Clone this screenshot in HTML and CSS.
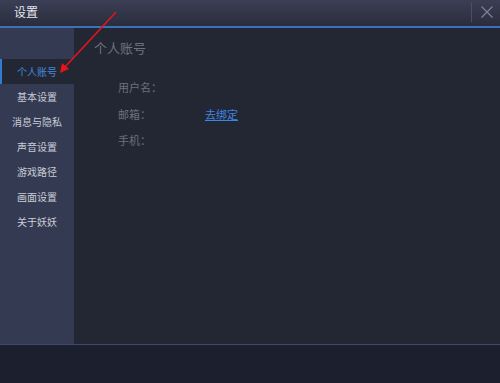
FILE: index.html
```html
<!DOCTYPE html>
<html>
<head>
<meta charset="utf-8">
<link rel="stylesheet" href="styles.css">
</head>
<body>
<div class="window">
  <div class="titlebar">
    <span class="title">设置</span>
    <div class="close">
      <svg width="14" height="14" viewBox="0 0 14 14"><path d="M1.5 1.5 L12.5 12.5 M12.5 1.5 L1.5 12.5" stroke="#7b8199" stroke-width="1.3" fill="none"/></svg>
    </div>
  </div>
  <div class="body">
    <div class="sidebar">
      <div class="item active">个人账号</div>
      <div class="item">基本设置</div>
      <div class="item">消息与隐私</div>
      <div class="item">声音设置</div>
      <div class="item">游戏路径</div>
      <div class="item">画面设置</div>
      <div class="item">关于妖妖</div>
    </div>
    <div class="main">
      <div class="heading">个人账号</div>
      <div class="rows">
        <div class="row"><span class="label">用户名：</span></div>
        <div class="row"><span class="label">邮箱：</span><a class="link" href="#">去绑定</a></div>
        <div class="row"><span class="label">手机：</span></div>
      </div>
    </div>
  </div>
  <div class="footer"></div>
  <svg class="arrow" width="500" height="383" viewBox="0 0 500 383">
    <line x1="116" y1="12" x2="64" y2="68" stroke="#e2151b" stroke-width="1.6"/>
    <polygon points="60,73 62,63 69,69" fill="#e2151b"/>
  </svg>
</div>
</body>
</html>
```
FILE: styles.css
```css
* { box-sizing: border-box; }
html, body { margin: 0; padding: 0; }
body {
  width: 500px;
  height: 383px;
  overflow: hidden;
  background: #1c1f2d;
  font-family: "Noto Sans CJK SC", "Liberation Sans", sans-serif;
}
.window {
  position: relative;
  width: 500px;
  height: 383px;
  display: flex;
  flex-direction: column;
}
.titlebar {
  height: 28px;
  flex: none;
  background: linear-gradient(#3b3f55, #2a2d3d);
  border-bottom: 2px solid #3e70b8;
  display: flex;
  align-items: center;
  justify-content: space-between;
  padding-left: 14px;
}
.title {
  color: #e4e6ec;
  font-size: 12px;
  line-height: 12px;
  margin-top: -2px;
}
.close {
  width: 29px;
  height: 20px;
  margin-top: -3px;
  border-left: 1px solid #4a4f66;
  display: flex;
  align-items: center;
  justify-content: center;
  padding-left: 2px;
}
.close svg { display: block; }
.body {
  height: 317px;
  flex: none;
  display: flex;
  border-bottom: 1px solid #3e4a6e;
}
.sidebar {
  width: 74px;
  flex: none;
  background: #343a51;
  padding-top: 31px;
}
.item {
  height: 25px;
  display: flex;
  align-items: center;
  justify-content: center;
  color: #c9cdd8;
  font-size: 10px;
}
.item.active {
  background: #232733;
  color: #4288dc;
  border-left: 2px solid #2f7cd0;
  padding-right: 2px;
}
.main {
  flex: 1;
  background: #232733;
  padding-left: 20px;
  padding-top: 11px;
}
.heading {
  color: #6d7282;
  font-size: 13px;
  line-height: 18px;
}
.rows {
  padding-left: 24px;
  padding-top: 17px;
}
.row {
  height: 26.5px;
  display: flex;
  align-items: center;
  font-size: 11px;
}
.label {
  color: #6c707e;
  width: 87px;
}
.link {
  color: #3d86e2;
  text-decoration: underline;
}
.footer {
  flex: 1;
  background: #1c1f2d;
}
.arrow {
  position: absolute;
  left: 0;
  top: 0;
  pointer-events: none;
}
```
